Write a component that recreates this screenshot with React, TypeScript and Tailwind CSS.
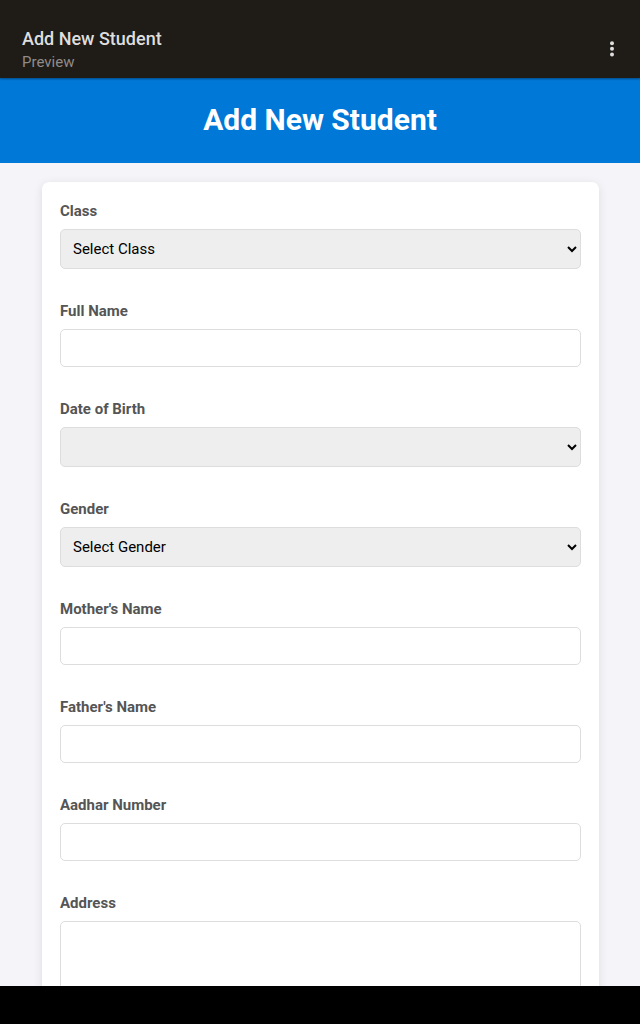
import type { ReactNode } from "react";

const box = "block w-full rounded-[5px] border border-[#dddddd] text-[15px] text-black";
const selectStyle = `${box} h-10 bg-[#eeeeee] pl-2`;
const inputStyle = `${box} h-[38px] bg-white px-3`;

function Field({ id, label, children }: { id: string; label: string; children: ReactNode }) {
  return (
    <div className="mb-8">
      <label htmlFor={id} className="mb-2 block text-[15px] leading-5 font-bold text-[#555555]">
        {label}
      </label>
      {children}
    </div>
  );
}

function TextField({ id, label }: { id: string; label: string }) {
  return (
    <Field id={id} label={label}>
      <input id={id} name={id} type="text" className={inputStyle} />
    </Field>
  );
}

export default function App() {
  return (
    <div className="flex h-screen flex-col overflow-hidden bg-[#f4f4f9] font-['Roboto',sans-serif]">
      <header className="z-10 flex shrink-0 items-center justify-between bg-[#1f1b17] pt-[26px] pr-4 pb-[6px] pl-[22px] shadow-[0_1px_2px_rgba(0,0,0,0.4)]">
        <div>
          <p className="text-lg leading-[26px] font-medium text-[#dedede]">Add New Student</p>
          <p className="text-[15px] leading-5 text-[#8f8c89]">Preview</p>
        </div>
        <button type="button" aria-label="More options" className="flex h-6 w-6 items-center justify-center">
          <svg viewBox="0 0 24 24" className="h-6 w-6" fill="#dedede" aria-hidden="true">
            <circle cx="12" cy="6.2" r="2" />
            <circle cx="12" cy="11.8" r="2" />
            <circle cx="12" cy="17.4" r="2" />
          </svg>
        </button>
      </header>

      <main className="min-h-0 flex-1 overflow-hidden">
        <div className="bg-[#0078d7] pt-[23px] pb-6 text-center">
          <h1 className="text-[30px] leading-[38px] font-bold text-white">Add New Student</h1>
        </div>
        <div className="pt-[19px] pr-[41px] pl-[42px]">
          <form className="rounded-[7px] bg-white px-[18px] pt-[19px] pb-5 shadow-[0_2px_10px_rgba(0,0,0,0.1)]">
            <Field id="class" label="Class">
              <select id="class" name="class" className={selectStyle}>
                <option>Select Class</option>
              </select>
            </Field>
            <TextField id="full-name" label="Full Name" />
            <Field id="birth-date" label="Date of Birth">
              <select id="birth-date" name="birth-date" className={selectStyle}>
                <option></option>
              </select>
            </Field>
            <Field id="gender" label="Gender">
              <select id="gender" name="gender" className={selectStyle}>
                <option>Select Gender</option>
              </select>
            </Field>
            <TextField id="mother-name" label="Mother's Name" />
            <TextField id="father-name" label="Father's Name" />
            <TextField id="aadhar-number" label="Aadhar Number" />
            <Field id="address" label="Address">
              <textarea id="address" name="address" rows={4} className={`${box} resize-none bg-white p-3`} />
            </Field>
          </form>
        </div>
      </main>

      <footer className="h-[38px] shrink-0 bg-black" />
    </div>
  );
}
